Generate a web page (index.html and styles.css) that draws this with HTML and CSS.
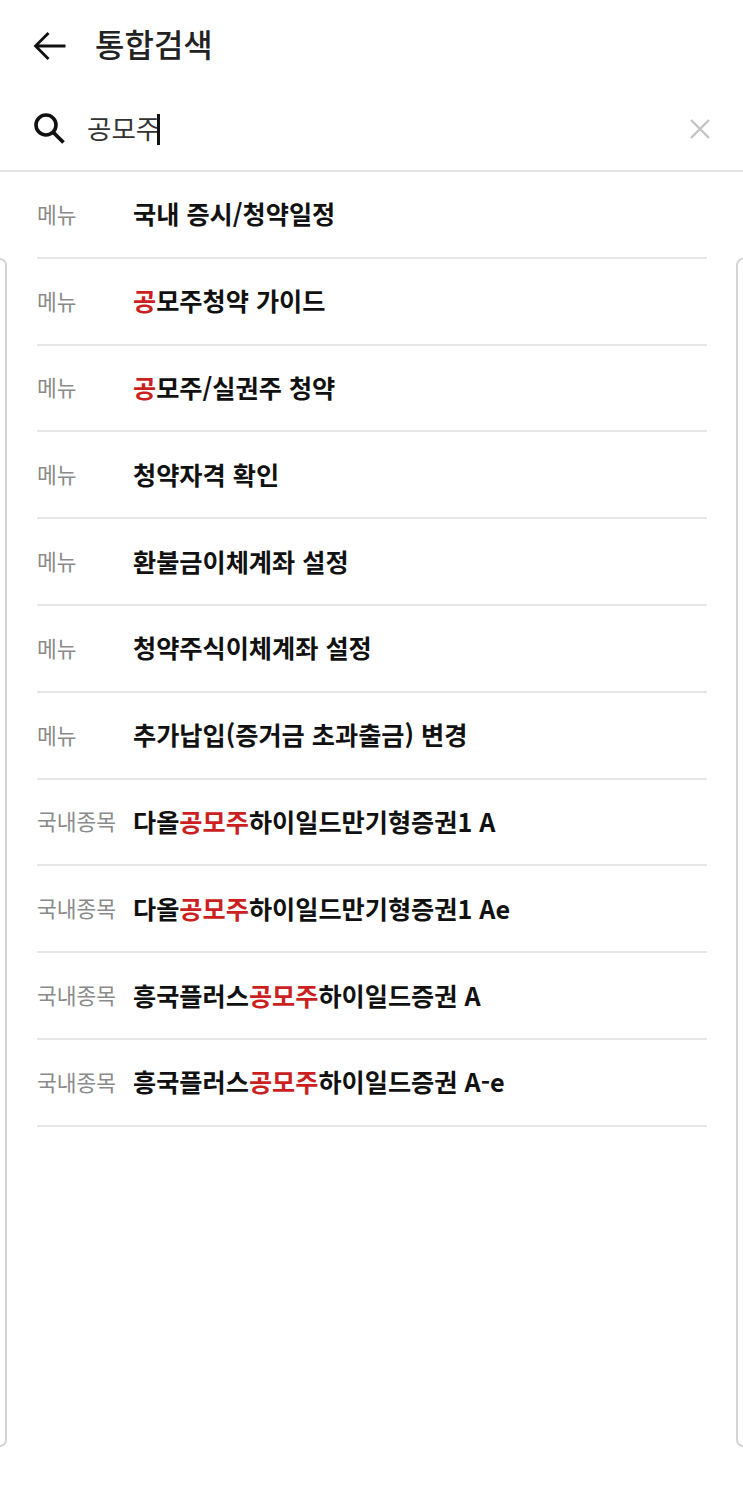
FILE: index.html
```html
<!DOCTYPE html>
<html lang="ko">

<head>
    <meta charset="UTF-8">
    <meta name="viewport" content="width=device-width, initial-scale=1.0">
    <title>통합검색</title>
    <link rel="stylesheet" href="styles.css">
</head>

<body>
    <div class="side-card side-card-left"></div>
    <div class="side-card side-card-right"></div>

    <header class="top-bar">
        <svg class="back-icon" viewBox="0 0 34 30" width="34" height="30">
            <path d="M32.5 15H2.5M15.5 2L2.5 15L15.5 28" fill="none" stroke="#111" stroke-width="2.8" />
        </svg>
        <h1 class="page-title">통합검색</h1>
    </header>

    <div class="search-bar">
        <svg class="search-icon" viewBox="0 0 32 32" width="32" height="32">
            <circle cx="13" cy="13" r="10" fill="none" stroke="#111" stroke-width="3.6" />
            <path d="M20.5 20.5L30.5 30.5" fill="none" stroke="#111" stroke-width="3.8" />
        </svg>
        <div class="search-text">공모주<span class="caret"></span></div>
        <svg class="clear-icon" viewBox="0 0 20 20" width="20" height="20">
            <path d="M1 1L19 19M19 1L1 19" fill="none" stroke="#c4c4c4" stroke-width="2.4" />
        </svg>
    </div>

    <ul class="result-list">
        <li class="result-row"><span class="result-type">메뉴</span><span class="result-name">국내 증시/청약일정</span></li>
        <li class="result-row"><span class="result-type">메뉴</span><span class="result-name"><em>공</em>모주청약 가이드</span></li>
        <li class="result-row"><span class="result-type">메뉴</span><span class="result-name"><em>공</em>모주/실권주 청약</span></li>
        <li class="result-row"><span class="result-type">메뉴</span><span class="result-name">청약자격 확인</span></li>
        <li class="result-row"><span class="result-type">메뉴</span><span class="result-name">환불금이체계좌 설정</span></li>
        <li class="result-row"><span class="result-type">메뉴</span><span class="result-name">청약주식이체계좌 설정</span></li>
        <li class="result-row"><span class="result-type">메뉴</span><span class="result-name">추가납입(증거금 초과출금) 변경</span></li>
        <li class="result-row"><span class="result-type">국내종목</span><span class="result-name">다올<em>공모주</em>하이일드만기형증권1 A</span></li>
        <li class="result-row"><span class="result-type">국내종목</span><span class="result-name">다올<em>공모주</em>하이일드만기형증권1 Ae</span></li>
        <li class="result-row"><span class="result-type">국내종목</span><span class="result-name">흥국플러스<em>공모주</em>하이일드증권 A</span></li>
        <li class="result-row"><span class="result-type">국내종목</span><span class="result-name">흥국플러스<em>공모주</em>하이일드증권 A-e</span></li>
    </ul>
</body>

</html>
```

FILE: styles.css
```css
body {
    font-family: "Noto Sans CJK KR", "Noto Sans", sans-serif;
    background-color: #fff;
    color: #111;
    margin: 0;
    padding: 0;
    height: 1499px;
    overflow: hidden;
}

.top-bar {
    display: flex;
    align-items: center;
    height: 86px;
    padding-left: 33px;
}

.back-icon {
    flex: none;
    margin-top: 6px;
    margin-right: 28px;
}

.page-title {
    margin: 0;
    font-size: 32px;
    font-weight: 500;
    line-height: 1;
    color: #222;
}

.search-bar {
    display: flex;
    align-items: center;
    height: 84px;
    padding: 0 33px;
    border-bottom: 2px solid #e4e4e4;
    background-color: #fff;
}

.search-icon {
    flex: none;
    margin-right: 22px;
}

.search-text {
    flex: 1;
    margin-top: 3px;
    font-size: 26.5px;
    line-height: 1;
    color: #333;
}

.caret {
    display: inline-block;
    width: 3px;
    height: 31px;
    margin-left: -3px;
    vertical-align: -6px;
    background-color: #111;
}

.clear-icon {
    flex: none;
    margin-top: 2px;
}

.result-list {
    position: relative;
    list-style: none;
    margin: 0;
    padding: 0 36px 0 37px;
}

.result-row {
    display: flex;
    align-items: center;
    box-sizing: border-box;
    height: 86.8px;
    padding-bottom: 2px;
    border-bottom: 2px solid #e6e6e6;
}

.result-type {
    flex: none;
    width: 96px;
    font-size: 21.5px;
    color: #8a8a8a;
}

.result-name {
    font-size: 25.2px;
    font-weight: 700;
    white-space: nowrap;
}

.result-name em {
    font-style: normal;
    color: #cc1f1f;
}

.side-card {
    position: absolute;
    top: 258px;
    width: 20px;
    height: 1189px;
    box-sizing: border-box;
    border: 2px solid #d4d4d4;
    border-radius: 7px;
}

.side-card-left {
    left: -13px;
}

.side-card-right {
    left: 736px;
}
```
